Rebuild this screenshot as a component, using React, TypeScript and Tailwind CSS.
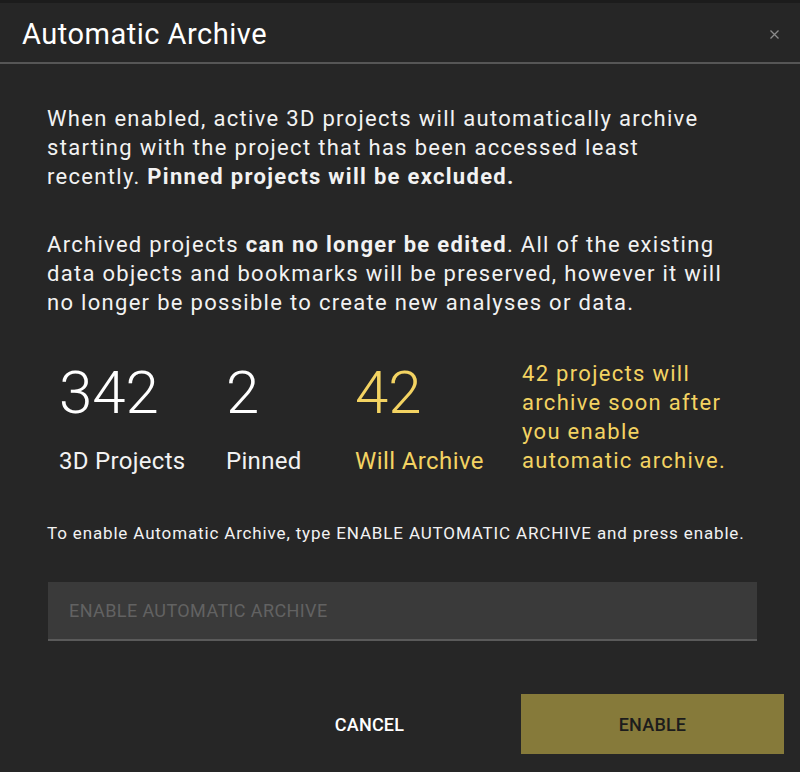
import React from "react";

export default function App() {
  const font = { fontFamily: "Roboto, 'Noto Sans', 'Liberation Sans', sans-serif" };
  return (
    <div
      className="w-[800px] h-[772px] bg-[#262626] border-t-[3px] border-[#1c1c1c] text-[#f2f2f2] overflow-hidden flex flex-col"
      style={font}
    >
      <div className="flex items-start justify-between pl-[22px] pr-[21px] pt-[13px] pb-[10px] border-b-2 border-[#565656]">
        <h1 className="text-[29px] leading-[36px] font-normal text-white tracking-[0.5px]">Automatic Archive</h1>
        <button className="mt-[14px] text-[#8a8a8a]" aria-label="Close">
          <svg width="9" height="9" viewBox="0 0 9 9" stroke="currentColor" strokeWidth="1.3">
            <path d="M0.5 0.5 L8.5 8.5 M8.5 0.5 L0.5 8.5" />
          </svg>
        </button>
      </div>

      <div className="pl-[47px] pr-[20px] pt-[40px] flex flex-col">
        <p className="text-[22px] leading-[29px] whitespace-nowrap tracking-[1.3px]">
          When enabled, active 3D projects will automatically archive
          <br />
          starting with the project that has been accessed least
          <br />
          recently. <span className="font-bold">Pinned projects will be excluded.</span>
        </p>
        <p className="mt-[39px] text-[22px] leading-[29px] whitespace-nowrap tracking-[1.3px]">
          Archived projects <span className="font-bold">can no longer be edited</span>. All of the existing
          <br />
          data objects and bookmarks will be preserved, however it will
          <br />
          no longer be possible to create new analyses or data.
        </p>

        <div className="mt-[42px] flex items-start">
          <div className="flex pl-[12px] pt-[4px]">
            <div className="w-[167px] flex flex-col">
              <span className="text-[60px] leading-[60px] font-light text-white">342</span>
              <span className="mt-[24px] text-[24px] leading-[29px] tracking-[0.3px]">3D Projects</span>
            </div>
            <div className="w-[129px] flex flex-col">
              <span className="text-[60px] leading-[60px] font-light text-white">2</span>
              <span className="mt-[24px] text-[24px] leading-[29px] tracking-[0.3px]">Pinned</span>
            </div>
            <div className="w-[167px] flex flex-col text-[#f3d362]">
              <span className="text-[60px] leading-[60px] font-light">42</span>
              <span className="mt-[24px] text-[24px] leading-[29px] tracking-[0.4px]">Will Archive</span>
            </div>
          </div>
          <p className="text-[22px] leading-[29px] text-[#f3d362] whitespace-nowrap tracking-[1.3px]">
            42 projects will
            <br />
            archive soon after
            <br />
            you enable
            <br />
            automatic archive.
          </p>
        </div>

        <p className="mt-[45px] text-[17px] leading-[24px] whitespace-nowrap tracking-[0.85px]">
          To enable Automatic Archive, type ENABLE AUTOMATIC ARCHIVE and press enable.
        </p>

        <input
          className="mt-[37px] ml-[1px] w-[709px] h-[59px] bg-[#3a3a3a] border-b-2 border-[#5a5a5a] pl-[21px] text-[18px] tracking-[0.4px] text-white placeholder:text-[#626262] outline-none"
          placeholder="ENABLE AUTOMATIC ARCHIVE"
          style={font}
        />
      </div>

      <div className="mt-[53px] flex justify-end gap-[20px] pr-[16px]">
        <button className="w-[263px] h-[60px] text-[18px] font-medium text-white tracking-[0.2px]">
          CANCEL
        </button>
        <button className="w-[263px] h-[60px] bg-[#867a3a] text-[18px] font-medium text-[#1c1c1c] tracking-[0.2px]">
          ENABLE
        </button>
      </div>
    </div>
  );
}
